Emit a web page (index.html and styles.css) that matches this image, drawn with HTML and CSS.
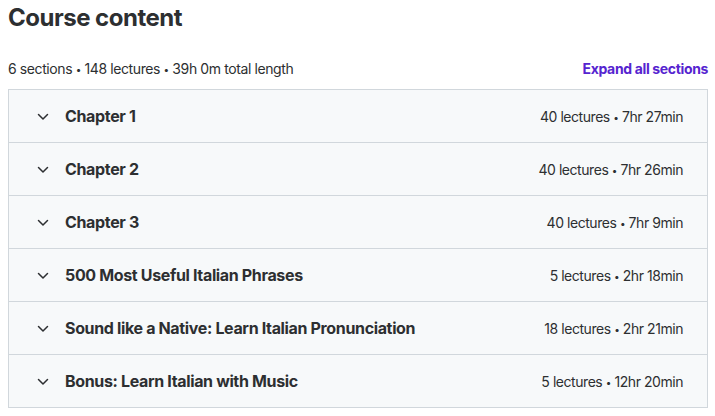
FILE: index.html
```html
<!DOCTYPE html>
<html>
<head>
<meta charset="utf-8">
<link rel="stylesheet" href="styles.css">
</head>
<body>
<div class="course">
  <h2 class="title">Course content</h2>
  <div class="summary">
    <span class="stats">6 sections <span class="dot">•</span> 148 lectures <span class="dot">•</span> 39h 0m total length</span>
    <a class="expand">Expand all sections</a>
  </div>
  <div class="sections">
    <div class="row"><span class="chev"><svg width="20" height="20" viewBox="0 0 20 20"><path d="M5.5 8.5l4.5 4.5 4.5-4.5" fill="none" stroke="#2d2f31" stroke-width="1.5" stroke-linecap="round" stroke-linejoin="round"/></svg></span><span class="name">Chapter 1</span><span class="meta">40 lectures <span class="dot">•</span> 7hr 27min</span></div>
    <div class="row"><span class="chev"><svg width="20" height="20" viewBox="0 0 20 20"><path d="M5.5 8.5l4.5 4.5 4.5-4.5" fill="none" stroke="#2d2f31" stroke-width="1.5" stroke-linecap="round" stroke-linejoin="round"/></svg></span><span class="name">Chapter 2</span><span class="meta">40 lectures <span class="dot">•</span> 7hr 26min</span></div>
    <div class="row"><span class="chev"><svg width="20" height="20" viewBox="0 0 20 20"><path d="M5.5 8.5l4.5 4.5 4.5-4.5" fill="none" stroke="#2d2f31" stroke-width="1.5" stroke-linecap="round" stroke-linejoin="round"/></svg></span><span class="name">Chapter 3</span><span class="meta">40 lectures <span class="dot">•</span> 7hr 9min</span></div>
    <div class="row"><span class="chev"><svg width="20" height="20" viewBox="0 0 20 20"><path d="M5.5 8.5l4.5 4.5 4.5-4.5" fill="none" stroke="#2d2f31" stroke-width="1.5" stroke-linecap="round" stroke-linejoin="round"/></svg></span><span class="name">500 Most Useful Italian Phrases</span><span class="meta">5 lectures <span class="dot">•</span> 2hr 18min</span></div>
    <div class="row"><span class="chev"><svg width="20" height="20" viewBox="0 0 20 20"><path d="M5.5 8.5l4.5 4.5 4.5-4.5" fill="none" stroke="#2d2f31" stroke-width="1.5" stroke-linecap="round" stroke-linejoin="round"/></svg></span><span class="name">Sound like a Native: Learn Italian Pronunciation</span><span class="meta">18 lectures <span class="dot">•</span> 2hr 21min</span></div>
    <div class="row"><span class="chev"><svg width="20" height="20" viewBox="0 0 20 20"><path d="M5.5 8.5l4.5 4.5 4.5-4.5" fill="none" stroke="#2d2f31" stroke-width="1.5" stroke-linecap="round" stroke-linejoin="round"/></svg></span><span class="name">Bonus: Learn Italian with Music</span><span class="meta">5 lectures <span class="dot">•</span> 12hr 20min</span></div>
  </div>
</div>
</body>
</html>
```
FILE: styles.css
```css
html, body {
  margin: 0;
  padding: 0;
  background: #fff;
}
body {
  padding: 0 7px 0 8px;
  font-family: Inter, "Liberation Sans", sans-serif;
  color: #2d2f31;
}
.title {
  margin: 0;
  padding-top: 4px;
  font-size: 24px;
  font-weight: 700;
  line-height: 28px;
  letter-spacing: -0.5px;
}
.summary {
  display: flex;
  justify-content: space-between;
  align-items: center;
  margin-top: 27px;
  margin-bottom: 10px;
  font-size: 14px;
  line-height: 20px;
}
.stats {
  letter-spacing: -0.4px;
}
.dot {
  font-size: 10px;
  vertical-align: 1px;
}
.expand {
  color: #5624d0;
  font-weight: 700;
  letter-spacing: -0.35px;
}
.sections {
  border: 1px solid #d1d7dc;
  border-bottom: none;
}
.row {
  display: flex;
  align-items: center;
  height: 52px;
  padding: 0 24px;
  background: #f7f9fa;
  border-bottom: 1px solid #d1d7dc;
}
.chev {
  display: flex;
  width: 20px;
  height: 20px;
  margin-right: 12px;
}
.name {
  flex: 1;
  font-size: 16px;
  font-weight: 700;
  letter-spacing: -0.35px;
}
.meta {
  font-size: 14px;
  letter-spacing: -0.45px;
}
```
